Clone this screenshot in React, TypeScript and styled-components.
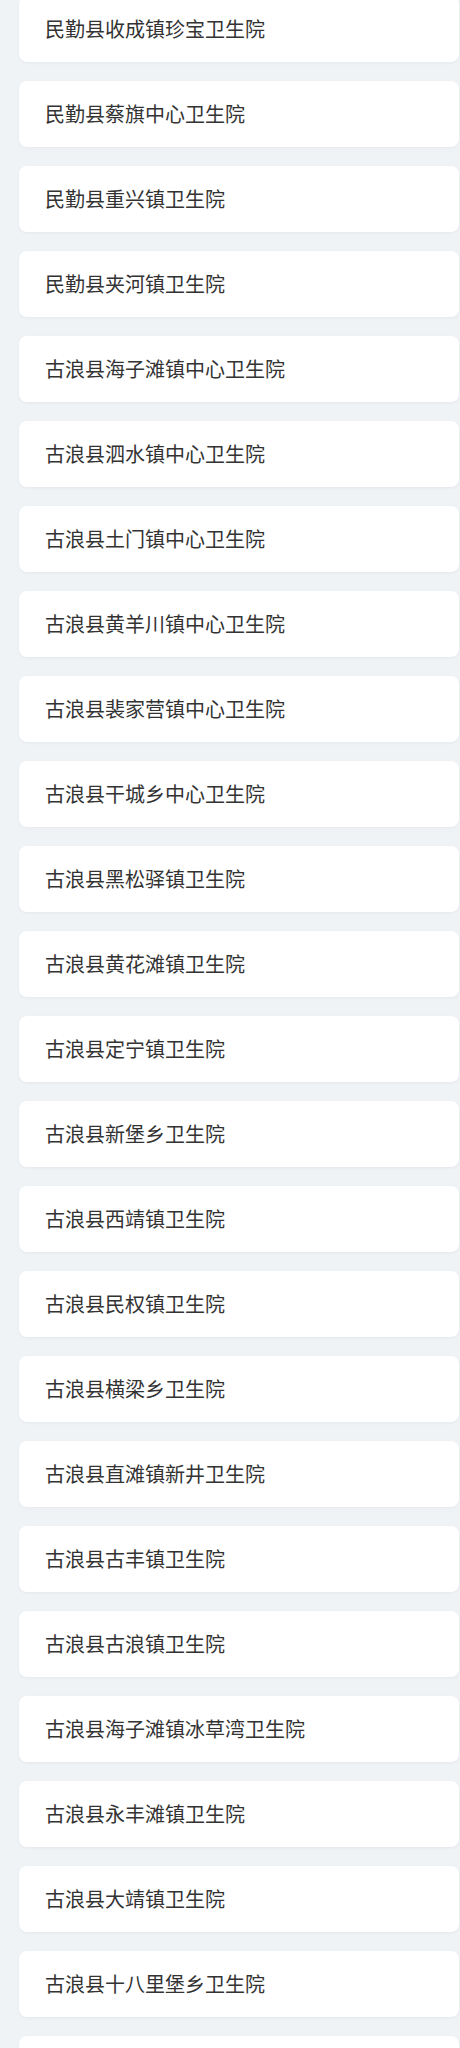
import React from "react";
import styled, { createGlobalStyle } from "styled-components";

const Global = createGlobalStyle`
  html, body { margin: 0; padding: 0; background: #f0f3f6; }
  body { font-family: "Noto Sans CJK SC", "Noto Sans", sans-serif; }
`;

const Page = styled.div`
  display: flex;
  flex-direction: column;
  gap: 19px;
  padding: 0 1px 0 19px;
  margin-top: -4px;
`;

const Card = styled.div`
  height: 66px;
  box-sizing: border-box;
  background: #ffffff;
  border-radius: 8px;
  box-shadow: 0 1px 3px rgba(30, 50, 80, 0.06);
  display: flex;
  align-items: center;
  padding-left: 26px;
`;

const Name = styled.span`
  font-size: 20px;
  color: #333333;
  line-height: 1;
`;

const items = [
  "民勤县收成镇珍宝卫生院",
  "民勤县蔡旗中心卫生院",
  "民勤县重兴镇卫生院",
  "民勤县夹河镇卫生院",
  "古浪县海子滩镇中心卫生院",
  "古浪县泗水镇中心卫生院",
  "古浪县土门镇中心卫生院",
  "古浪县黄羊川镇中心卫生院",
  "古浪县裴家营镇中心卫生院",
  "古浪县干城乡中心卫生院",
  "古浪县黑松驿镇卫生院",
  "古浪县黄花滩镇卫生院",
  "古浪县定宁镇卫生院",
  "古浪县新堡乡卫生院",
  "古浪县西靖镇卫生院",
  "古浪县民权镇卫生院",
  "古浪县横梁乡卫生院",
  "古浪县直滩镇新井卫生院",
  "古浪县古丰镇卫生院",
  "古浪县古浪镇卫生院",
  "古浪县海子滩镇冰草湾卫生院",
  "古浪县永丰滩镇卫生院",
  "古浪县大靖镇卫生院",
  "古浪县十八里堡乡卫生院",
  "",
];

export default function App() {
  return (
    <>
      <Global />
      <Page>
        {items.map((t, i) => (
          <Card key={i}>
            {t && <Name>{t}</Name>}
          </Card>
        ))}
      </Page>
    </>
  );
}
